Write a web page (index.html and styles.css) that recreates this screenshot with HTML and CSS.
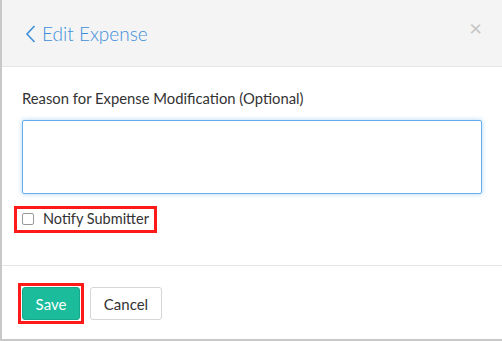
FILE: index.html
```html
<!DOCTYPE html>
<html lang="en">
<head>
    <meta charset="UTF-8">
    <title>Edit Expense</title>
    <link rel="stylesheet" href="styles.css">
</head>
<body>

<div class="modal">
    <div class="modal-header">
        <h3 class="modal-title">
            <svg class="back-icon" width="11" height="18" viewBox="0 0 11 18"><path d="M9.5 1 L2 9 L9.5 17" fill="none" stroke="#3f8fdb" stroke-width="1.6"/></svg>
            Edit Expense
        </h3>
        <span class="close">&times;</span>
    </div>

    <div class="modal-body">
        <label class="field-label" for="reason">Reason for Expense Modification (Optional)</label>
        <textarea id="reason" class="reason-input"></textarea>
        <div class="highlight notify-row">
            <label class="notify"><span class="checkbox"></span>Notify Submitter</label>
        </div>
    </div>

    <div class="modal-footer">
        <div class="highlight save-wrap">
            <button class="btn btn-save">Save</button>
        </div>
        <button class="btn btn-cancel">Cancel</button>
    </div>
</div>

</body>
</html>
```

FILE: styles.css
```css
body {
    margin: 0;
    height: 341px;
    overflow: hidden;
    background: #c8c8c8;
    font-family: "Lato", "Open Sans", sans-serif;
    color: #333;
}
.modal {
    margin-left: 2px;
    height: 339px;
    background: #fff;
}
.modal-header {
    height: 67px;
    background: #f4f4f4;
    border-bottom: 1px solid #e6e6e6;
    display: flex;
    align-items: center;
    justify-content: space-between;
    padding: 0 20px 0 23px;
    box-sizing: border-box;
}
.modal-title {
    margin: 0;
    font-size: 19px;
    font-weight: 300;
    color: #3f8fdb;
    display: flex;
    align-items: center;
    gap: 6px;
    padding-top: 1px;
}
.close {
    font-size: 22px;
    color: #c4c4c4;
    line-height: 1;
    margin-bottom: 10px;
}
.modal-body {
    padding: 22px 18px 0 20px;
    height: 199px;
    box-sizing: border-box;
    border-bottom: 1px solid #e6e6e6;
}
.field-label {
    display: block;
    font-size: 14.8px;
    color: #333;
    margin-bottom: 13px;
}
.reason-input {
    display: block;
    width: 460px;
    height: 74px;
    box-sizing: border-box;
    border: 1px solid #66adf0;
    border-radius: 2px;
    box-shadow: 0 0 5px rgba(102, 173, 240, 0.5);
    resize: none;
    margin: 0;
}
.highlight {
    border: 3px solid #ff1a1a;
}
.notify-row {
    display: inline-block;
    margin: 12px 0 0 -8px;
    padding: 1px 5px 3px 5px;
}
.notify {
    display: flex;
    align-items: center;
    font-size: 14.5px;
    color: #333;
}
.checkbox {
    width: 10px;
    height: 10px;
    border: 1px solid #999;
    border-radius: 2px;
    margin-right: 9px;
}
.modal-footer {
    display: flex;
    align-items: center;
    gap: 6px;
    padding: 17px 0 0 16px;
}
.save-wrap {
    padding: 1px;
    display: flex;
}
.btn {
    font-family: inherit;
    font-size: 15px;
    height: 33px;
    border-radius: 3px;
    cursor: pointer;
}
.btn-save {
    width: 58px;
    background: #1abc9c;
    color: #fff;
    border: 1px solid #16a98b;
}
.btn-cancel {
    width: 72px;
    background: #fff;
    color: #333;
    border: 1px solid #d6d6d6;
}
```
